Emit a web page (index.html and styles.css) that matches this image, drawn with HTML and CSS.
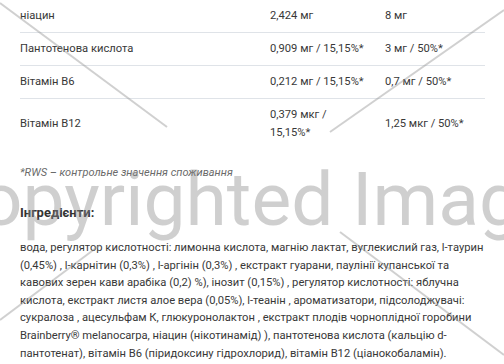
FILE: index.html
```html
<!DOCTYPE html>
<html lang="uk">
<head>
<meta charset="utf-8">
<link rel="stylesheet" href="styles.css">
</head>
<body>
<div class="page">
  <table class="nutri">
    <colgroup><col class="c1"><col class="c2"><col class="c3"></colgroup>
    <tr><td>ніацин</td><td>2,424 мг</td><td>8 мг</td></tr>
    <tr><td>Пантотенова кислота</td><td>0,909 мг / 15,15%*</td><td>3 мг / 50%*</td></tr>
    <tr><td>Вітамін В6</td><td>0,212 мг / 15,15%*</td><td>0,7 мг / 50%*</td></tr>
    <tr class="last"><td>Вітамін В12</td><td>0,379 мкг / 15,15%*</td><td>1,25 мкг / 50%*</td></tr>
  </table>
  <p class="note">*RWS – контрольне значення споживання</p>
  <h3 class="ing-title">Інгредієнти:</h3>
  <p class="ing">вода, регулятор кислотності: лимонна кислота, магнію лактат, вуглекислий газ, l-таурин (0,45%) , l-карнітин (0,3%) , l-аргінін (0,3%) , екстракт гуарани, паулінії купанської та кавових зерен кави арабіка (0,2) %), інозит (0,15%) , регулятор кислотності: яблучна кислота, екстракт листя алое вера (0,05%), l-теанін , ароматизатори, підсолоджувачі: сукралоза , ацесульфам К, глюкуронолактон , екстракт плодів чорноплідної горобини Brainberry® melanocarpa, ніацин (нікотинамід) ), пантотенова кислота (кальцію d-пантотенат), вітамін В6 (піридоксину гідрохлорид), вітамін В12 (ціанокобаламін).</p>
</div>
<div class="watermark">
  <svg class="wm-lines" width="504" height="364" viewBox="0 0 504 364">
    <line x1="0" y1="3" x2="167" y2="127"/>
    <line x1="504" y1="10" x2="330" y2="132"/>
    <line x1="100" y1="245" x2="0" y2="320"/>
    <line x1="340" y1="232" x2="504" y2="355"/>
  </svg>
  <span class="wm-text">Copyrighted Images</span>
</div>
</body>
</html>
```
FILE: styles.css
```css
html, body {
  margin: 0;
  padding: 0;
  background: #fff;
}
body {
  width: 504px;
  height: 364px;
  overflow: hidden;
  position: relative;
  font-family: Roboto, "Liberation Sans", Arial, sans-serif;
  color: #383838;
}
.page {
  padding: 0 17px 0 20px;
}
.nutri {
  width: 465px;
  border-collapse: collapse;
  table-layout: fixed;
  font-size: 11.2px;
  line-height: 18px;
}
.c1 { width: 250px; }
.c2 { width: 115px; }
.c3 { width: 100px; }
.nutri td {
  padding: 7px 8px 7px 0;
  vertical-align: middle;
  border-bottom: 1px solid #dfe3e8;
}
.nutri td:nth-child(2) {
  padding-right: 16px;
}
.nutri tr.last td {
  border-bottom: none;
}
.note {
  margin: 15px 0 0;
  font-size: 11px;
  font-style: italic;
  line-height: 18px;
  color: #6a6a6a;
}
.ing-title {
  margin: 21px 0 0;
  font-size: 13px;
  font-weight: 700;
  line-height: 20px;
  color: #333;
}
.ing {
  margin: 16px 0 0;
  font-size: 11.2px;
  line-height: 17.6px;
  color: #383838;
}
.watermark {
  position: absolute;
  left: 0;
  top: 0;
  width: 504px;
  height: 364px;
  pointer-events: none;
  overflow: hidden;
}
.wm-lines {
  position: absolute;
  left: 0;
  top: 0;
}
.wm-lines line {
  stroke: rgba(150, 150, 150, 0.45);
  stroke-width: 2;
}
.wm-text {
  position: absolute;
  left: -69px;
  top: 162px;
  font-family: Roboto, sans-serif;
  font-size: 75px;
  line-height: 75px;
  white-space: nowrap;
  color: rgba(140, 140, 140, 0.42);
}
```
